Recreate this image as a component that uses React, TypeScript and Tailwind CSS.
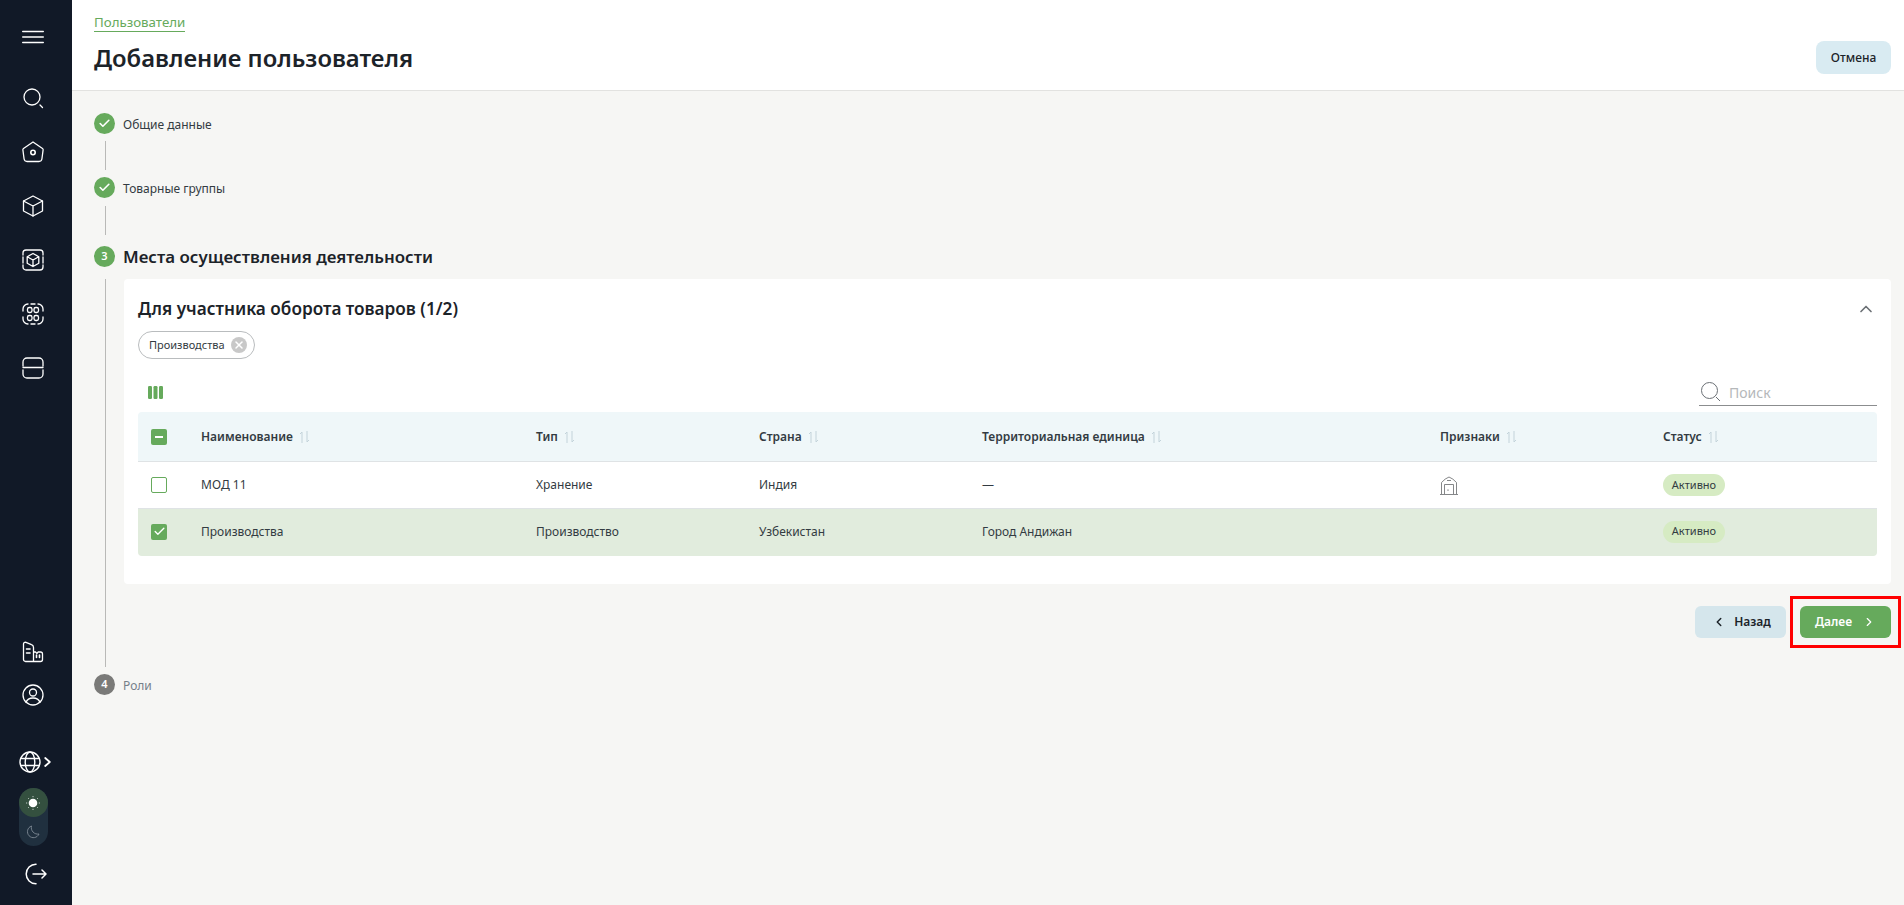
import type { ReactNode } from "react";
import { Check, ChevronLeft, ChevronRight, ChevronUp, X } from "lucide-react";

const font = { fontFamily: '"Noto Sans", sans-serif' };

const SideIcon = ({ children, size = 22 }: { children: ReactNode; size?: number }) => (
    <svg width={size} height={size} viewBox="0 0 22 22" fill="none" stroke="#fff" strokeWidth="1.3" strokeLinecap="round" strokeLinejoin="round">
        {children}
    </svg>
);

const navItems: ReactNode[] = [
    <>
        <circle cx="10" cy="10" r="8" />
        <path d="M18 18l2.500 2.500" />
    </>,
    <>
        <path d="M11 1 20.500 7.500a1.500 1.500 0 0 1 .6 1.500l-1.200 9a3 3 0 0 1-3 2.500H5.100a3 3 0 0 1-3-2.500L.9 9a1.500 1.500 0 0 1 .6-1.500z" />
        <circle cx="11" cy="11.500" r="2.200" strokeWidth="1.600" />
    </>,
    <>
        <path d="M11 1 20.500 6v10L11 21 1.500 16V6z" />
        <path d="M1.500 6 11 11l9.500-5M11 11v10" />
    </>,
    <>
        <path d="M1 6V4a3 3 0 0 1 3-3h14a3 3 0 0 1 3 3v2M21 16v2a3 3 0 0 1-3 3H4a3 3 0 0 1-3-3v-2M1 8v6M21 8v6" />
        <path d="M11 4.500l5.800 3.200v6.600L11 17.500l-5.800-3.200V7.700zM5.200 7.700 11 11l5.800-3.300M11 11v6.500" />
    </>,
    <>
        <rect x="5.500" y="4.500" width="4.500" height="5" rx="1.800" />
        <rect x="12" y="4.500" width="4.500" height="5" rx="1.800" />
        <rect x="5.500" y="12.500" width="4.500" height="5" rx="1.800" />
        <rect x="12" y="12.500" width="4.500" height="5" rx="1.800" />
        <path d="M1 8V6a5 5 0 0 1 5-5M21 8V6a5 5 0 0 0-5-5M1 14v2a5 5 0 0 0 5 5M21 14v2a5 5 0 0 1-5 5M9 1h4M9 21h4" />
    </>,
    <>
        <path d="M1 9V5a4 4 0 0 1 4-4h12a4 4 0 0 1 4 4v4M1 10.500h20M1 13v4a4 4 0 0 0 4 4h12a4 4 0 0 0 4-4v-4" />
    </>,
];

const Sidebar = () => (
    <aside className="flex w-[72px] shrink-0 flex-col items-center bg-[#111927] pr-[6px] pb-[15px]">
        <div className="mt-[10px] flex h-[54px] w-full items-center justify-center">
            <svg width="22" height="14" viewBox="0 0 22 14" stroke="#fff" strokeWidth="1.400" strokeLinecap="round">
                <path d="M.7 1.500h20.600M.7 7h20.600M.7 12.500h20.600" />
            </svg>
        </div>
        <div className="mt-[7px] flex flex-col">
            {navItems.map((icon, i) => (
                <div key={i} className="flex h-[54px] items-center justify-center">
                    <SideIcon>{icon}</SideIcon>
                </div>
            ))}
        </div>
        <div className="flex-1" />
        <SideIcon>
            <path d="M11.500 20.500H3.500A2 2 0 0 1 1.500 18.500V3A1.800 1.800 0 0 1 4 1.400l5.500 2.200a3 3 0 0 1 2 2.800zM11.500 20.500h7a2 2 0 0 0 2-2v-5.500a2 2 0 0 0-2-2h-2.500l-1 1.500-1.500-1.500h-2" />
            <path d="M4.500 8h3.500M4.500 12h3.500M14.500 14v2.500M17.500 14v2.500" strokeWidth="1.600" />
        </SideIcon>
        <div className="mt-[21px]">
            <SideIcon>
                <circle cx="11" cy="11" r="10" />
                <circle cx="11" cy="8.500" r="3.500" />
                <path d="M4 18.500c1-3 3.800-4.500 7-4.500s6 1.500 7 4.500" />
            </SideIcon>
        </div>
        <div className="mt-[45px] flex items-center gap-[3px] pl-[3px]">
            <svg width="22" height="22" viewBox="0 0 22 22" fill="none" stroke="#fff" strokeWidth="1.400">
                <circle cx="11" cy="11" r="10" />
                <ellipse cx="11" cy="11" rx="4.800" ry="10" />
                <path d="M1.500 7.500h19M1.500 14.500h19" />
            </svg>
            <svg width="7" height="10" viewBox="0 0 7 10" fill="none" stroke="#fff" strokeWidth="1.800" strokeLinecap="round" strokeLinejoin="round">
                <path d="M1.200 1 5.800 5 1.200 9" />
            </svg>
        </div>
        <div className="mt-[15px] flex h-[58px] w-[29px] flex-col rounded-full bg-[#20303f]">
            <div className="flex size-[29px] items-center justify-center rounded-full bg-[#34503f]">
                <svg width="14" height="14" viewBox="0 0 14 14" fill="#fff">
                    <circle cx="7" cy="7" r="4.300" />
                    <path d="M7 0v1.200M7 12.800V14M0 7h1.200M12.800 7H14M2 2l.8.8M11.200 11.200l.8.8M2 12l.8-.8M11.200 2.800l.8-.8" stroke="#fff" strokeWidth="0.700" />
                </svg>
            </div>
            <div className="flex size-[29px] items-center justify-center">
                <svg width="14" height="14" viewBox="0 0 14 14" fill="none" stroke="#7f8a95" strokeWidth="0.900">
                    <path d="M5.500 1a6 6 0 1 0 7.500 8A6.500 6.500 0 0 1 5.500 1z" />
                </svg>
            </div>
        </div>
        <div className="mt-[12px] flex h-[32px] items-center pl-[5px]">
            <svg width="22" height="22" viewBox="0 0 22 22" fill="none" stroke="#fff" strokeWidth="1.500" strokeLinecap="round" strokeLinejoin="round">
                <path d="M11 1.200A9.800 9.800 0 0 0 11 20.800M8 11h13M17 7l4 4-4 4" />
            </svg>
        </div>
    </aside>
);

const DoneStep = ({ label }: { label: string }) => (
    <div className="flex h-[21px] items-center">
        <span className="flex size-[21px] items-center justify-center rounded-full bg-[#66aa5c]">
            <Check className="size-[13px] text-white" strokeWidth={3} />
        </span>
        <span className="mt-[2px] ml-2 text-xs text-[#333b42]">{label}</span>
    </div>
);

const SortIcon = () => (
    <svg className="ml-[6px]" width="11" height="12" viewBox="0 0 11 12" fill="none" stroke="#c3d3da" strokeWidth="1">
        <path d="M3 12V1M3 1 1 3M8 0v11M8 11l2-2" />
    </svg>
);

const Cb = ({ state }: { state: "none" | "some" | "all" }) => (
    <span className={state === "none"
        ? "flex size-4 items-center justify-center rounded-[2px] border-[1.500px] border-[#66aa5c] bg-white"
        : "flex size-4 items-center justify-center rounded-[2px] bg-[#66aa5c]"}>
        {state === "some" && <span className="h-[2px] w-2 bg-white" />}
        {state === "all" && <Check className="size-[13px] text-white" strokeWidth={2.500} />}
    </span>
);

const Badge = () => (
    <span className="flex h-[22px] w-[62px] items-center justify-center rounded-full bg-[#d6ebc3] text-[11px] text-[#333b42]">Активно</span>
);

const Warehouse = () => (
    <svg width="18" height="19" viewBox="0 0 18 19" fill="none" stroke="#77797c" strokeWidth="0.900">
        <path d="M1.500 18V6.500Q5 2.500 9 1q4 1.500 7.500 5.500V18M0 18.500h18M4.500 18V8.500h9V18M7 4.500h4" />
        <path d="M8 13.500v1.200" strokeWidth="1.200" />
    </svg>
);

const gridCols = "grid grid-cols-[63px_335px_223px_223px_458px_223px_1fr] items-center";

const rows = [
    { name: "МОД 11", type: "Хранение", country: "Индия", unit: "—", icon: true, selected: false },
    { name: "Производства", type: "Производство", country: "Узбекистан", unit: "Город Андижан", icon: false, selected: true },
];

const headers = ["Наименование", "Тип", "Страна", "Территориальная единица", "Признаки", "Статус"];

export default function App() {
    return (
        <div style={font} className="relative flex h-[905px] w-full overflow-hidden bg-[#f6f6f4] text-[#1c2329]">
            <Sidebar />
            <main className="flex min-w-0 flex-1 flex-col">
                <header className="flex h-[91px] shrink-0 items-start justify-between border-b border-[#e2e2e0] bg-white pl-[22px] pr-[13px]">
                    <div>
                        <a className="mt-[13px] block w-fit border-b border-[#66aa5c] text-[13.300px] leading-[18px] text-[#66aa5c]">Пользователи</a>
                        <h1 className="mt-[10px] text-[23.800px] leading-[32px] font-semibold">Добавление пользователя</h1>
                    </div>
                    <button className="mt-[41px] h-[33px] w-[75px] rounded-[8px] bg-[#d9ebf2] text-xs font-medium">Отмена</button>
                </header>

                <div className="flex flex-col pt-[22px] pl-[22px] pr-[13px]">
                    <DoneStep label="Общие данные" />
                    <div className="mt-[7px] ml-[11px] h-[29px] w-px bg-[#b9b9b7]" />
                    <div className="mt-[7px]">
                        <DoneStep label="Товарные группы" />
                    </div>
                    <div className="mt-2 ml-[11px] h-[29px] w-px bg-[#b9b9b7]" />
                    <div className="mt-[11px] flex h-[21px] items-center">
                        <span className="flex size-[21px] items-center justify-center rounded-full bg-[#66aa5c] text-[11px] font-semibold text-white">3</span>
                        <span className="ml-2 text-[16.900px] leading-[21px] font-semibold">Места осуществления деятельности</span>
                    </div>
                    <div className="mt-3 flex">
                        <div className="ml-[11px] w-px bg-[#b9b9b7]" />
                        <div className="ml-[18px] flex-1 pb-[29px]">
                            <section className="rounded-[4px] bg-white px-[14px] pt-[17px] pb-[28px]">
                                <div className="flex h-[26px] items-center justify-between">
                                    <h2 className="text-[17.200px] font-semibold">Для участника оборота товаров (1/2)</h2>
                                    <ChevronUp className="mr-[1px] size-[20px] text-[#6b7075]" strokeWidth={2} />
                                </div>
                                <div className="mt-[9px] flex h-[28px] w-[117px] items-center rounded-full border border-[#b9bcbe] pl-[10px]">
                                    <span className="text-[11px] text-[#333b42]">Производства</span>
                                    <span className="ml-[6px] flex size-4 items-center justify-center rounded-full bg-[#c8c8c8]">
                                        <X className="size-[12px] text-white" strokeWidth={3} />
                                    </span>
                                </div>
                                <div className="mt-[20px] flex h-[33px] items-start justify-between">
                                    <svg className="mt-[7px] ml-[10px]" width="15" height="13" viewBox="0 0 15 13" fill="#66aa5c">
                                        <rect x="0" y="0" width="4" height="13" rx="1.200" />
                                        <rect x="5.500" y="0" width="4" height="13" rx="1.200" />
                                        <rect x="11" y="0" width="4" height="13" rx="1.200" />
                                    </svg>
                                    <div className="flex h-[27px] w-[178px] items-center border-b border-[#8b8d8f] pl-[2px]">
                                        <svg width="20" height="20" viewBox="0 0 20 20" fill="none" stroke="#6b7075" strokeWidth="1">
                                            <circle cx="8.500" cy="8.500" r="8" />
                                            <path d="M15 15l4 4" />
                                        </svg>
                                        <span className="mt-[2px] ml-[8px] text-sm text-[#b5b8ba]">Поиск</span>
                                    </div>
                                </div>
                                <div className="overflow-hidden rounded-[4px] text-xs text-[#333b42]">
                                    <div className={`${gridCols} h-[50px] border-b border-[#dfe3e5] bg-[#eff7f9] font-semibold`}>
                                        <span className="pl-[13px]"><Cb state="some" /></span>
                                        {headers.map((h) => (
                                            <span key={h} className="flex items-center">{h}<SortIcon /></span>
                                        ))}
                                    </div>
                                    {rows.map((r) => (
                                        <div key={r.name} className={r.selected
                                            ? `${gridCols} h-[47px] bg-[#e1ecdd] pb-[2px]`
                                            : `${gridCols} h-[47px] border-b border-[#dfe3e5] bg-white`}>
                                            <span className="pl-[13px]"><Cb state={r.selected ? "all" : "none"} /></span>
                                            <span>{r.name}</span>
                                            <span>{r.type}</span>
                                            <span>{r.country}</span>
                                            <span>{r.unit}</span>
                                            <span>{r.icon && <Warehouse />}</span>
                                            <Badge />
                                        </div>
                                    ))}
                                </div>
                            </section>
                            <div className="mt-[22px] flex justify-end gap-[14px]">
                                <button className="flex h-8 w-[91px] items-center justify-center rounded-[6px] bg-[#d5e6ec] pl-[2px] text-xs font-semibold">
                                    <ChevronLeft className="mr-[8px] size-[14px]" strokeWidth={2.500} />
                                    Назад
                                </button>
                                <button className="flex h-8 w-[91px] items-center justify-center rounded-[6px] bg-[#66aa5c] text-xs font-semibold text-white">
                                    Далее
                                    <ChevronRight className="ml-[10px] size-[14px]" strokeWidth={2} />
                                </button>
                            </div>
                        </div>
                    </div>
                    <div className="mt-[7px] flex h-[21px] items-center">
                        <span className="flex size-[21px] items-center justify-center rounded-full bg-[#7a7a78] text-[11px] font-semibold text-white">4</span>
                        <span className="mt-[3px] ml-2 text-xs text-[#75808a]">Роли</span>
                    </div>
                </div>
            </main>
            <div className="absolute top-[596px] left-[1790px] h-[52px] w-[111px] border-[3px] border-[#f00]" />
        </div>
    );
}
